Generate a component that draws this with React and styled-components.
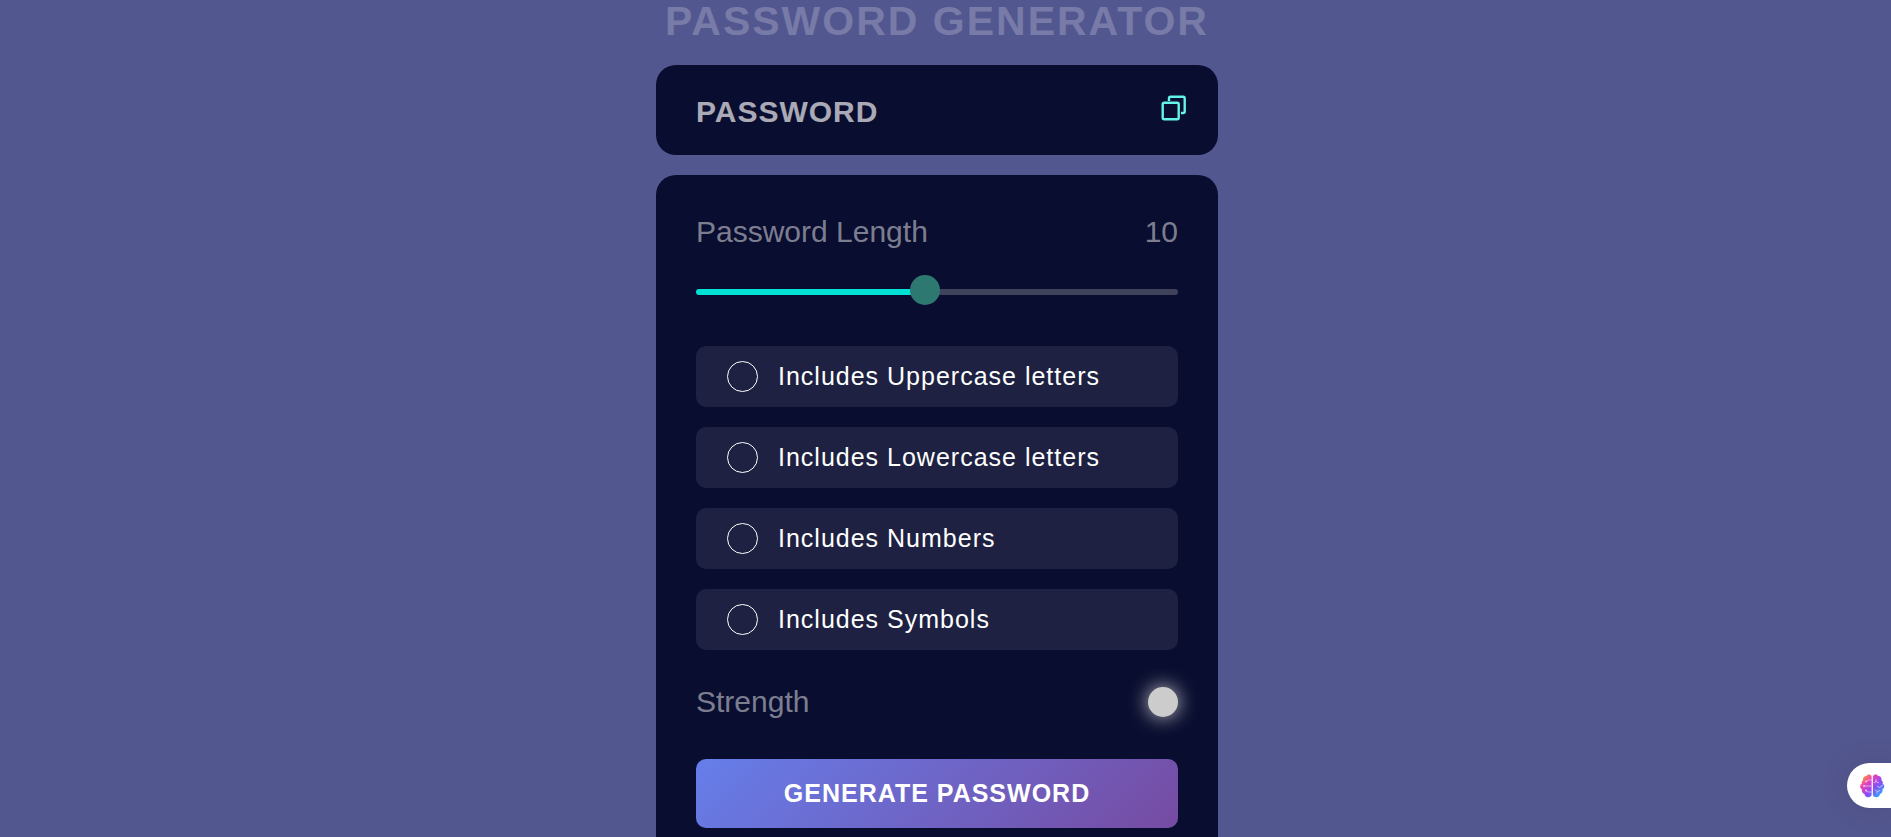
import React, { useState } from "react";
import styled, { createGlobalStyle } from "styled-components";

const GlobalStyle = createGlobalStyle`
  *, *::before, *::after { box-sizing: border-box; }
  body {
    margin: 0;
    height: 100vh;
    overflow: hidden;
    background: #53578f;
    font-family: "Liberation Sans", Arial, sans-serif;
  }
`;

const Page = styled.div`
  display: flex;
  justify-content: center;
  padding-right: 17px;
`;

const Container = styled.main`
  width: 100%;
  max-width: 562px;
`;

const Title = styled.h1`
  margin: 0 0 23px;
  font-size: 41px;
  line-height: 42px;
  letter-spacing: 2px;
  text-align: center;
  text-transform: uppercase;
  white-space: nowrap;
  color: rgba(255, 255, 255, 0.22);
`;

const DisplayCard = styled.div`
  display: flex;
  align-items: flex-start;
  padding: 28px 32px 24px 40px;
  margin-bottom: 20px;
  border-radius: 20px;
  background: #090d2f;
`;

const PasswordField = styled.input`
  flex: 1;
  min-width: 0;
  height: 38px;
  padding: 0;
  border: 0;
  outline: 0;
  background: transparent;
  color: #fff;
  font-family: inherit;
  font-size: 30px;
  font-weight: 700;
  letter-spacing: 1px;

  &::placeholder {
    color: #fff;
    opacity: 0.65;
  }
`;

const CopyButton = styled.button`
  display: flex;
  align-items: center;
  height: 30px;
  padding: 0;
  border: 0;
  background: transparent;
  color: #64f2e9;
  cursor: pointer;
`;

const SettingsCard = styled.form`
  padding: 40px;
  border-radius: 20px;
  background: #090d2f;
`;

const Row = styled.div`
  display: flex;
  align-items: center;
  justify-content: space-between;
  margin-bottom: 40px;
  font-size: 30px;
  line-height: 34px;
  color: rgba(255, 255, 255, 0.48);
`;

const Slider = styled.input`
  appearance: none;
  display: block;
  width: 100%;
  height: 6px;
  margin: 0 0 51px;
  border-radius: 4px;
  background: linear-gradient(#00e0d3, #00e0d3) 0 0 / var(--fill) 100% no-repeat #40425c;
  cursor: pointer;

  &::-webkit-slider-runnable-track {
    height: 6px;
  }

  &::-webkit-slider-thumb {
    appearance: none;
    width: 30px;
    height: 30px;
    margin-top: -14px;
    border-radius: 50%;
    background: #2d7972;
  }
`;

const Options = styled.div`
  display: grid;
  gap: 20px;
  margin-bottom: 35px;
`;

const Option = styled.label`
  display: flex;
  align-items: center;
  gap: 20px;
  height: 61px;
  padding: 0 31px;
  border-radius: 10px;
  background: #1e2141;
  color: #fff;
  font-size: 25px;
  letter-spacing: 1px;
  cursor: pointer;
`;

const Tick = styled.input`
  appearance: none;
  flex: none;
  width: 31px;
  height: 31px;
  margin: 0;
  border: 1px solid #fff;
  border-radius: 50%;

  &:checked {
    background: #00e0d3;
  }
`;

const StrengthDot = styled.span`
  width: 30px;
  height: 30px;
  border-radius: 50%;
  background: #ccc;
  box-shadow: 0 0 20px #ccc;
`;

const GenerateButton = styled.button`
  display: block;
  width: 100%;
  height: 69px;
  padding: 0;
  border: 0;
  border-radius: 10px;
  background: linear-gradient(135deg, #667eea 0%, #764ba2 100%);
  color: #fff;
  font-family: inherit;
  font-size: 25px;
  font-weight: 700;
  letter-spacing: 1px;
  text-transform: uppercase;
  cursor: pointer;
`;

const AssistantButton = styled.button`
  position: fixed;
  right: 0;
  bottom: 29px;
  display: flex;
  align-items: center;
  width: 44px;
  height: 45px;
  padding: 0 0 0 12px;
  border: 0;
  border-radius: 23px 0 0 23px;
  background: #fff;
  box-shadow: 0 0 30px rgba(0, 0, 0, 0.1);
  cursor: pointer;
`;

const CopyIcon = () => (
  <svg width="25" height="26" viewBox="0 0 25 26" fill="none" stroke="currentColor" strokeWidth="2.4" aria-hidden="true">
    <rect x="1.700" y="7.700" width="16" height="16.500" rx="1.500" />
    <path d="M8 6V3.200A1.500 1.500 0 0 1 9.500 1.700H22.200A1.500 1.500 0 0 1 23.700 3.200V16.500A1.500 1.500 0 0 1 22.200 18H20" />
  </svg>
);

const BrainIcon = () => (
  <svg width="26" height="26" viewBox="0 0 26 26" fill="none" aria-hidden="true">
    <defs>
      <linearGradient id="brain" x1="4" y1="3" x2="23" y2="23" gradientUnits="userSpaceOnUse">
        <stop offset="0" stopColor="#ff9b28" />
        <stop offset="0.28" stopColor="#e83fc0" />
        <stop offset="0.6" stopColor="#8a4cf5" />
        <stop offset="1" stopColor="#22b4ff" />
      </linearGradient>
    </defs>
    <path
      fill="url(#brain)"
      d="M12.600 3.500C11.800 1 8.500 .900 7.500 3 5 3 3.500 5 4 7.300 2.600 8.200 2.400 9.800 2.800 10.800 .500 12 .700 15.300 2.800 16.200 2.400 19 4 20.600 5.400 20.900 6 24.800 11.400 25.300 12.600 22.300ZM13.900 3.500C14.700 1 18 .900 19 3 21.500 3 23 5 22.400 7.300 24 8.200 24.100 9.800 23.600 10.800 26 12 25.700 15.300 23.600 16.200 24 19 22.400 20.600 21 20.900 20.500 24.800 15.100 25.300 13.900 22.300Z"
    />
    <g stroke="#fff" strokeOpacity="0.55" strokeWidth="1">
      <path d="M12.300 7H9.500L7 8.500M12.300 13H5M12.300 19H9L7 17.500M17 6V8.500L20 10M17 8.500L15 10M18 13L20.500 14.500 24 12M16 16.500L18 18.500 21 17.500M18 18.500V20.500" />
    </g>
    <g fill="#fff" fillOpacity="0.6">
      <circle cx="7" cy="8.500" r="1" />
      <circle cx="5" cy="13" r="1" />
      <circle cx="7" cy="17.500" r="1" />
    </g>
  </svg>
);

const OPTIONS = [
  { id: "uppercase", label: "Includes Uppercase letters", chars: "ABCDEFGHIJKLMNOPQRSTUVWXYZ" },
  { id: "lowercase", label: "Includes Lowercase letters", chars: "abcdefghijklmnopqrstuvwxyz" },
  { id: "numbers", label: "Includes Numbers", chars: "0123456789" },
  { id: "symbols", label: "Includes Symbols", chars: "!@#$%^&*()-_=+[]{};:,.?" },
];

const MIN = 1;
const MAX = 20;

export default function App() {
  const [length, setLength] = useState(10);
  const [picked, setPicked] = useState({});
  const [password, setPassword] = useState("");

  const generate = (event) => {
    event.preventDefault();
    const pool = OPTIONS.filter((o) => picked[o.id]).map((o) => o.chars).join("");
    if (!pool) return;
    setPassword(Array.from({ length }, () => pool[Math.floor(Math.random() * pool.length)]).join(""));
  };

  return (
    <>
      <GlobalStyle />
      <Page>
        <Container>
          <Title>Password Generator</Title>
          <DisplayCard>
            <PasswordField readOnly value={password} placeholder="PASSWORD" aria-label="Generated password" />
            <CopyButton type="button" aria-label="Copy" onClick={() => navigator.clipboard?.writeText(password)}>
              <CopyIcon />
            </CopyButton>
          </DisplayCard>
          <SettingsCard onSubmit={generate}>
            <Row>
              <label htmlFor="length">Password Length</label>
              <output htmlFor="length">{length}</output>
            </Row>
            <Slider
              id="length"
              type="range"
              min={MIN}
              max={MAX}
              value={length}
              onChange={(e) => setLength(Number(e.target.value))}
              style={{ "--fill": `${((length - MIN) * 100) / (MAX - MIN)}%` }}
            />
            <Options>
              {OPTIONS.map((o) => (
                <Option key={o.id} htmlFor={o.id}>
                  <Tick
                    id={o.id}
                    type="checkbox"
                    checked={!!picked[o.id]}
                    onChange={(e) => setPicked({ ...picked, [o.id]: e.target.checked })}
                  />
                  {o.label}
                </Option>
              ))}
            </Options>
            <Row>
              <span>Strength</span>
              <StrengthDot />
            </Row>
            <GenerateButton type="submit">Generate Password</GenerateButton>
          </SettingsCard>
        </Container>
      </Page>
      <AssistantButton type="button" aria-label="Assistant">
        <BrainIcon />
      </AssistantButton>
    </>
  );
}
